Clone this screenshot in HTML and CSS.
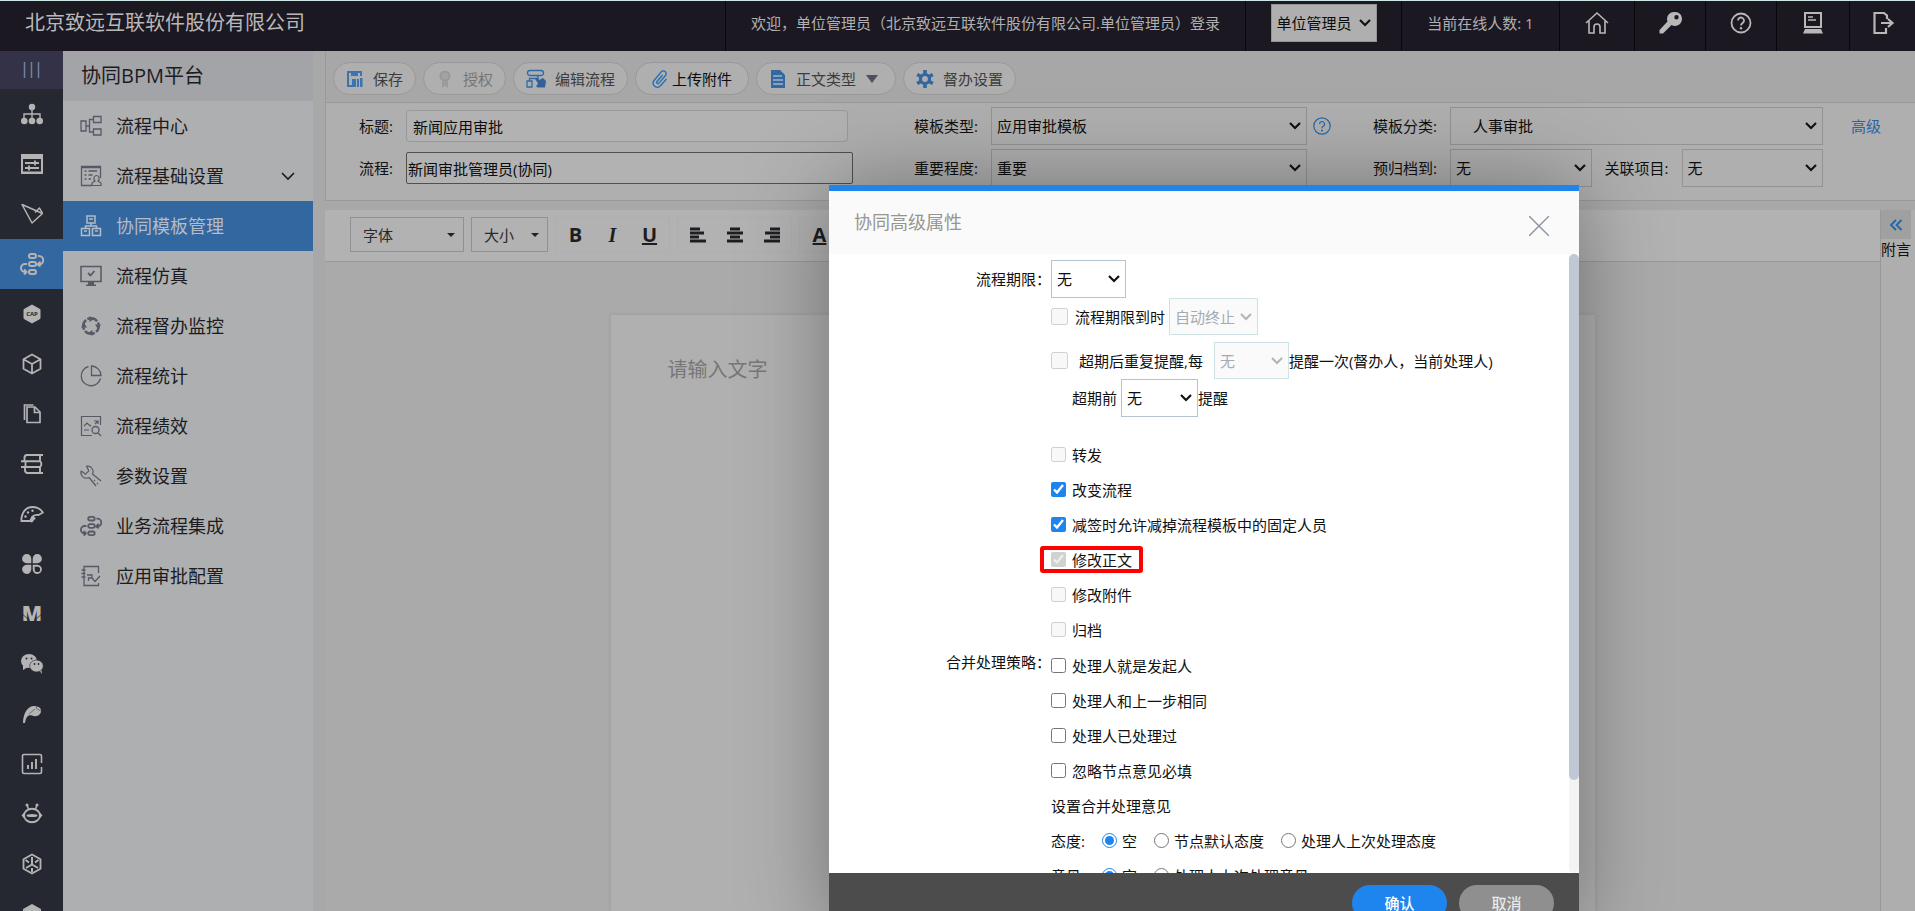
FILE: index.html
```html
<!DOCTYPE html>
<html lang="zh-CN">
<head>
<meta charset="utf-8">
<title>协同BPM平台</title>
<link rel="stylesheet" href="styles.css">
</head>
<body>
<svg class="symbols" aria-hidden="true">
  <symbol id="i-flow" viewBox="0 0 24 24"><g fill="none" stroke="currentColor" stroke-width="2"><rect x="9" y="2" width="7" height="4" rx="2"/><rect x="9" y="10" width="7" height="4" rx="2"/><rect x="9" y="18" width="7" height="4" rx="2"/><path d="M18 4h1a4 4 0 0 1 0 8.500M7 12H5a4 4 0 0 0 0 8h1M20.500 9.800 17.500 12.500l3 2M4 17.500l2.500 2.500L4 22.500"/></g></symbol>
</svg>
<div class="page">
  <header class="topbar">
    <h1 class="company">北京致远互联软件股份有限公司</h1>
    <div class="cell welcome">欢迎，单位管理员（北京致远互联软件股份有限公司.单位管理员）登录</div>
    <div class="cell role"><select class="select role-select" aria-label="角色"><option>单位管理员</option></select></div>
    <div class="cell online">当前在线人数: 1</div>
    <button class="cell tool w-home" aria-label="首页"><svg class="ico24" viewBox="0 0 24 24"><path d="M1 12 12 2l11 10M4 10v12h5v-6a3 3 0 0 1 6 0v6h5V10" fill="none" stroke="currentColor" stroke-width="1.600"/></svg></button>
    <button class="cell tool" aria-label="修改密码"><svg class="ico24" viewBox="0 0 24 24"><path fill="currentColor" fill-rule="evenodd" d="M16 1a7 7 0 0 0-6.500 9.500L1.500 19v3.500H5L13.500 14A7 7 0 1 0 16 1zm2.500 3a2.200 2.200 0 1 1 0 4.400 2.200 2.200 0 0 1 0-4.400z"/></svg></button>
    <button class="cell tool" aria-label="帮助"><svg class="ico24" viewBox="0 0 24 24"><g fill="none" stroke="currentColor" stroke-width="1.800"><circle cx="12" cy="12" r="9.500"/><path d="M9 9.500a3 3 0 1 1 4.500 2.600c-1 .6-1.500 1.100-1.500 2.400"/></g><circle cx="12" cy="17.300" r="1.200" fill="currentColor"/></svg></button>
    <button class="cell tool w-pc" aria-label="桌面"><svg class="ico24" viewBox="0 0 24 24"><path d="M4 2h16v14H4z" fill="none" stroke="currentColor" stroke-width="2"/><path d="M7 6h5M7 9h8" stroke="currentColor" stroke-width="1.600"/><path d="M4 18h16l2 4.500H2z" fill="currentColor"/></svg></button>
    <button class="cell tool w-exit" aria-label="退出"><svg class="ico24" viewBox="0 0 24 24"><path d="M16 8V4.500L13 2H3.500v20H15v-5M10 12h11M17 8l4.500 4-4.500 4" fill="none" stroke="currentColor" stroke-width="2.200"/></svg></button>
  </header>

  <div class="main">
    <nav class="rail" aria-label="应用">
      <button class="rail-top" aria-label="收起"><svg class="ico22" viewBox="0 0 22 22"><path d="M3.500 3v16M10.500 3v16M17.500 3v16" stroke="#6f7f9e" stroke-width="1.500"/></svg></button>
      <a href="#" class="rail-item" aria-label="组织"><svg class="ico22" viewBox="0 0 22 22"><path d="M11 4v12M3 16v-5h16v5" fill="none" stroke="currentColor" stroke-width="1.400"/><circle cx="11" cy="4" r="3.200" fill="currentColor"/><circle cx="3.300" cy="18" r="3.300" fill="currentColor"/><circle cx="11" cy="18" r="3.300" fill="currentColor"/><circle cx="18.700" cy="18" r="3.300" fill="currentColor"/></svg></a>
      <a href="#" class="rail-item" aria-label="配置"><svg class="ico22" viewBox="0 0 22 22"><path d="M0 1h22v20H0zM2 6v12.500h18V6z" fill="currentColor" fill-rule="evenodd"/><path d="M4 10h14M4 15h14M14 7.500v5M8 12.500v5" stroke="currentColor" stroke-width="1.800"/></svg></a>
      <a href="#" class="rail-item" aria-label="指引"><svg class="ico22" viewBox="0 0 22 22"><path d="M1 1.500 11 20l10.500-9.500zM14 9.500l4.500-4.500 3 5.500" fill="none" stroke="currentColor" stroke-width="1.500" stroke-linejoin="round"/></svg></a>
      <a href="#" class="rail-item rail-on" aria-label="协同流程"><svg class="ico24"><use href="#i-flow"/></svg></a>
      <a href="#" class="rail-item" aria-label="CAP"><svg class="ico22" viewBox="0 0 22 22"><path d="m11 2 8 4.500v9L11 20l-8-4.500v-9z" fill="currentColor" stroke="currentColor" stroke-linejoin="round"/><text x="11" y="13" text-anchor="middle" class="cap-text">CAP</text></svg></a>
      <a href="#" class="rail-item" aria-label="业务"><svg class="ico22" viewBox="0 0 22 22"><path d="m11 1.500 8.500 4.700v9.600L11 20.500l-8.500-4.700V6.200zM2.500 6.200 11 11l8.500-4.800M11 11v9.500" fill="none" stroke="currentColor" stroke-width="1.800" stroke-linejoin="round"/></svg></a>
      <a href="#" class="rail-item" aria-label="文档"><svg class="ico22" viewBox="0 0 22 22"><path d="M6 4h8l5 5v10.500H6zM13.500 4.500V9.500H19M3.500 17V2h9" fill="none" stroke="currentColor" stroke-width="1.700"/></svg></a>
      <a href="#" class="rail-item" aria-label="知识"><svg class="ico22" viewBox="0 0 22 22"><path d="M22 2H5.500a3 3 0 0 0-2 3v3M0 8.200h19M19 2v6a4 4 0 0 1 0 6M0 14h19M5.500 8a3 3 0 0 0-1 3v3M4 14v3a3 3 0 0 0 2 3h16M19 14v6" fill="none" stroke="currentColor" stroke-width="1.900"/></svg></a>
      <a href="#" class="rail-item" aria-label="仪表盘"><svg class="ico24" viewBox="0 0 24 24"><path d="M1.300 19C1.500 10 6 5 12.500 5c4 0 8 2 10.500 5.500l-4.500 2.500c-2.500-.5-5 0-6.500 2l-1.500 4z" fill="none" stroke="currentColor" stroke-width="1.800" stroke-linejoin="round"/><path d="m10.500 19.500 4-4.500" stroke="currentColor" stroke-width="3.500"/><circle cx="5.500" cy="14.500" r="1.200" fill="currentColor"/><circle cx="8" cy="10.500" r="1.200" fill="currentColor"/><circle cx="12.500" cy="8.800" r="1.200" fill="currentColor"/></svg></a>
      <a href="#" class="rail-item" aria-label="应用"><svg class="ico22" viewBox="0 0 22 22"><g fill="currentColor"><path d="M10.300 10.300H5.500a4.600 4.600 0 1 1 4.800-4.800zM11.700 10.300V5.500a4.600 4.600 0 1 1 4.800 4.800zM10.300 11.700v4.800a4.600 4.600 0 1 1-4.800-4.800z"/><path fill-rule="evenodd" d="M11.700 11.700h4.800a4.600 4.600 0 1 1-4.800 4.800zm2 2v2.800a2.700 2.700 0 1 0 2.800-2.800z"/></g></svg></a>
      <a href="#" class="rail-item" aria-label="M"><svg class="ico22" viewBox="0 0 22 22"><text x="11" y="18" text-anchor="middle" class="m-text">M</text><path d="M0 10l7 6M22 10l-7 6" stroke="#252830" stroke-width=".8"/></svg></a>
      <a href="#" class="rail-item" aria-label="微信"><svg class="ico24" viewBox="0 0 24 24"><ellipse cx="9" cy="9" rx="8" ry="7" fill="currentColor"/><path d="m3 13 0 5 5-3zM18 17l4 5-1-7z" fill="currentColor"/><ellipse cx="16.500" cy="14" rx="6.800" ry="6" fill="currentColor" stroke="#252830" stroke-width=".6"/><g fill="#252830"><circle cx="6.500" cy="6.500" r="1"/><circle cx="11.500" cy="6.500" r="1"/><circle cx="14.500" cy="12" r=".9"/><circle cx="18.500" cy="12" r=".9"/></g></svg></a>
      <a href="#" class="rail-item" aria-label="写作"><svg class="ico22" viewBox="0 0 22 22"><path d="M2 20C2 10 7 3 13 3c4 0 8 2 7 6-1 4-6 5-9 3.500C7 11.500 5 14 4 20z" fill="currentColor"/><path d="m8 11 6-5M15 3l1 3 4 2" stroke="#252830" stroke-width=".5" fill="none"/></svg></a>
      <a href="#" class="rail-item" aria-label="报表"><svg class="ico22" viewBox="0 0 22 22"><path d="M20.500 10V3a1.500 1.500 0 0 0-1.500-1.500H3A1.500 1.500 0 0 0 1.500 3v16A1.500 1.500 0 0 0 3 20.500h16a1.500 1.500 0 0 0 1.500-1.500v-5" fill="none" stroke="currentColor" stroke-width="1.600"/><path d="M7 16v-4M11 16V9M15 16V6" stroke="currentColor" stroke-width="1.900"/></svg></a>
      <a href="#" class="rail-item" aria-label="机器人"><svg class="ico22" viewBox="0 0 22 22"><path d="M7.500 6 6 2M14.500 6 16 2" stroke="currentColor" stroke-width="1.500"/><circle cx="6" cy="2" r="1.500" fill="currentColor"/><circle cx="16" cy="2" r="1.500" fill="currentColor"/><ellipse cx="11" cy="12.500" rx="8" ry="6.700" fill="none" stroke="currentColor" stroke-width="1.900"/><ellipse cx="11" cy="12.500" rx="5.500" ry="1.500" fill="currentColor"/><path d="M3 9.500.5 12.500 3 15zM19 9.500l2.500 3L19 15z" fill="currentColor"/></svg></a>
      <a href="#" class="rail-item" aria-label="集成"><svg class="ico22" viewBox="0 0 22 22"><path d="m11 1.500 8.500 4.700v9.600L11 20.500l-8.500-4.700V6.200z" fill="none" stroke="currentColor" stroke-width="1.800" stroke-linejoin="round"/><path d="M11 4v7.500l-6 3.500M11 11.500l6 3.500M4.500 7 8 9.500M17.500 7 14 9.500M11 19v-4" fill="none" stroke="currentColor" stroke-width="2"/></svg></a>
      <a href="#" class="rail-item" aria-label="更多"><svg class="ico22" viewBox="0 0 22 22"><path d="m11 1 9 5v2l-9 5-9-5V6z" fill="currentColor"/><path d="m2 12 9 5 9-5v3l-9 5-9-5z" fill="currentColor"/></svg></a>
    </nav>

    <nav class="side" aria-label="协同BPM平台">
      <h2 class="side-title">协同BPM平台</h2>
      <a href="#" class="side-item"><svg class="ico22" viewBox="0 0 22 22"><path d="M1 6h5v10H1zM13.500 1.500h7.500v6h-7.500zM13.500 14h7.500v6h-7.500zM6 11h3.500M13.500 4.500h-4v12.500h4" fill="none" stroke="currentColor" stroke-width="1.300"/></svg>流程中心</a>
      <a href="#" class="side-item"><svg class="ico22" viewBox="0 0 22 22"><path d="M12 20.500H1.500v-19h19V13M4.500 6h2M8.500 6H17M4.500 10h2M8.500 10h4M4.500 14h2M8.500 14H11" fill="none" stroke="currentColor" stroke-width="1.300"/><path d="M1.500 2.500h19" stroke="currentColor" stroke-width="1.500"/><path d="M16.500 10.500a2.500 3 0 0 1 1.500 5.500l3 2v2.500h-9V18l3-2a2.500 3 0 0 1 1.500-5.500z" fill="none" stroke="currentColor" stroke-width="1.200"/></svg>流程基础设置<svg class="chev" viewBox="0 0 16 16"><path d="m2 5 6 6 6-6" fill="none" stroke="currentColor" stroke-width="1.600"/></svg></a>
      <a href="#" class="side-item side-on"><svg class="ico22" viewBox="0 0 22 22"><path d="M7 1h8v7H7zM1.500 13.500h8v7h-8zM12.500 13.500h8v7h-8zM11 8v3M5.500 13.500V11h11v2.500M9 4h4M4 16h3M15 16h3" fill="none" stroke="currentColor" stroke-width="1.500"/></svg>协同模板管理</a>
      <a href="#" class="side-item"><svg class="ico22" viewBox="0 0 22 22"><path d="M1 1.500h20v15H1z" fill="none" stroke="currentColor" stroke-width="1.500"/><path d="m8 8 2.500 2.500L14.500 6" fill="none" stroke="currentColor" stroke-width="1.800"/><path d="M8 17h6v2.500h2V21H6v-1.500h2z" fill="currentColor"/></svg>流程仿真</a>
      <a href="#" class="side-item"><svg class="ico22" viewBox="0 0 22 22"><circle cx="11" cy="11" r="7.800" fill="none" stroke="currentColor" stroke-width="2.400" stroke-dasharray="10.700 1.550" stroke-dashoffset="4"/><path d="M9.500 1v6l4.500-3zM21 9.500h-6l3 4.500zM12.500 21v-6L8 18zM1 12.500h6L4 8z" fill="currentColor"/></svg>流程督办监控</a>
      <a href="#" class="side-item"><svg class="ico22" viewBox="0 0 22 22"><path d="M8.500 1.500a9.800 9.800 0 1 0 12 12M11.500 1v9.500H21A9.700 9.700 0 0 0 11.500 1z" fill="none" stroke="currentColor" stroke-width="1.300"/></svg>流程统计</a>
      <a href="#" class="side-item"><svg class="ico22" viewBox="0 0 22 22"><path d="M12 20.500H1.500v-19h19V10M4 11l3-3 3 3 1-1M4 15h5M14 6h4v3M18 6l-3 3" fill="none" stroke="currentColor" stroke-width="1.200"/><circle cx="15.500" cy="15" r="3.500" fill="none" stroke="currentColor" stroke-width="1.300"/><path d="m18 18 3 3" stroke="currentColor" stroke-width="1.300"/></svg>流程绩效</a>
      <a href="#" class="side-item"><svg class="ico22" viewBox="0 0 22 22"><path d="M16 21l-7-8.500A5.500 5.500 0 0 1 1.200 6l4.300 3.200 3.300-3.400L6.500 1.200A5.500 5.500 0 0 1 12.500 9l8.500 7M14 15l1 1M17 18l1 1" fill="none" stroke="currentColor" stroke-width="1.200" stroke-linejoin="round"/></svg>参数设置</a>
      <a href="#" class="side-item"><svg class="ico22"><use href="#i-flow"/></svg>业务流程集成</a>
      <a href="#" class="side-item"><svg class="ico22" viewBox="0 0 22 22"><path d="M18.500 8V1.500H4v19h14.500V18M1.500 5h4M1.500 8.500h4M1.500 12h4M7 10h5v3H8.500v3M12 13l3 3.500 5-5.500" fill="none" stroke="currentColor" stroke-width="1.300"/></svg>应用审批配置</a>
    </nav>

    <main class="content">
      <div class="actions">
        <button class="pill"><svg class="ico18" viewBox="0 0 18 18"><path d="M1 1h15v5h-2V3h-2v3H5V3H3v12h4v2H1zM6 9h4v8H6zM11 9h2v8h-2zM14 8h2.500v9H14z" fill="#3b74b0"/></svg>保存</button>
        <button class="pill pill-off" disabled><svg class="ico18" viewBox="0 0 18 18"><circle cx="9" cy="6" r="4.500" fill="#a2a2a2" stroke="#989898" stroke-width="2"/><path d="M6 11h6v7l-3-2-3 2z" fill="#9c9c9c"/></svg>授权</button>
        <button class="pill"><svg class="ico20" viewBox="0 0 20 20"><path d="M4 1.500h11a2 2 0 0 1 0 5H4a2 2 0 0 1 0-5zM1 12h5v6H1zM3.500 12V9.500h8.500V7" fill="none" stroke="#2f6ba8" stroke-width="1.300"/><path d="m9 9.500 2.500-1L13 11l4-2 3 3-1 6.500h-7l-2-1 2-3z" fill="#345f97"/></svg>编辑流程</button>
        <button class="pill pill-dark"><svg class="ico20" viewBox="0 0 20 20"><path d="M12.500 6 7 12.500a1.300 1.300 0 0 0 2 1.700l6.500-7.700a2.800 2.800 0 0 0-4.300-3.600L4 11.500a4.200 4.200 0 0 0 6.500 5.300L16.500 10" fill="none" stroke="#1f6fb8" stroke-width="1.300"/></svg>上传附件</button>
        <button class="pill"><svg class="ico18" viewBox="0 0 18 18"><path d="M2 0h9l5 5v13H2z" fill="#3568a0"/><path d="M4 6h9M4 10h10M4 14h10" stroke="#9fb2c8" stroke-width="1.300"/></svg>正文类型<svg class="tri" viewBox="0 0 12 8"><path d="M0 0h12L6 8z" fill="#4c4f5c"/></svg></button>
        <button class="pill"><svg class="ico18" viewBox="0 0 18 18"><path d="M9 4.500a4.500 4.500 0 1 0 0 9 4.500 4.500 0 0 0 0-9z" fill="none" stroke="#34679f" stroke-width="3.200"/><path d="M9 0v4M9 14v4M1.200 4.500l3.500 2M13.300 11.500l3.500 2M1.200 13.500l3.500-2M13.300 6.500l3.500-2" stroke="#34679f" stroke-width="3.600"/></svg>督办设置</button>
      </div>

      <form class="form">
        <label class="lab" for="title">标题:</label>
        <input class="text text-title" id="title" value="新闻应用审批">
        <label class="lab" for="kind">模板类型:</label>
        <select class="select" id="kind"><option>应用审批模板</option></select>
        <div class="lab-help">
          <svg class="ico18" viewBox="0 0 18 18"><g fill="none" stroke="#2469ab" stroke-width="1.200"><circle cx="9" cy="9" r="8.200"/><path d="M6.500 7a2.500 2.500 0 1 1 3.700 2.200C9.300 9.700 9 10.200 9 11.300"/></g><circle cx="9" cy="13.500" r="1" fill="#2469ab"/></svg>
          <label class="lab" for="class">模板分类:</label>
        </div>
        <select class="select indent" id="class"><option>人事审批</option></select>
        <a href="#" class="more">高级</a>

        <label class="lab" for="flow">流程:</label>
        <input class="text text-flow" id="flow" value="新闻审批管理员(协同)">
        <label class="lab" for="level">重要程度:</label>
        <select class="select" id="level"><option>重要</option></select>
        <label class="lab" for="archive">预归档到:</label>
        <div class="pair">
          <select class="select" id="archive"><option>无</option></select>
          <label class="lab" for="project">关联项目:</label>
          <select class="select" id="project"><option>无</option></select>
        </div>
      </form>

      <div class="work">
        <section class="editor">
          <div class="ed-bar">
            <button class="drop drop-font">字体<svg class="caret" viewBox="0 0 8 4"><path d="M0 0h8L4 4z"/></svg></button>
            <button class="drop drop-size">大小<svg class="caret" viewBox="0 0 8 4"><path d="M0 0h8L4 4z"/></svg></button>
            <div class="group">
              <button class="ed-btn b">B</button><button class="ed-btn i">I</button><button class="ed-btn u">U</button>
            </div>
            <div class="group">
              <button class="ed-btn" aria-label="左对齐"><svg class="ico16" viewBox="0 0 16 16"><path d="M0 2h10M0 6h14M0 10h9M0 14h16" stroke="currentColor" stroke-width="2.800"/></svg></button>
              <button class="ed-btn" aria-label="居中"><svg class="ico16" viewBox="0 0 16 16"><path d="M3 2h10M0 6h16M3 10h10M0 14h16" stroke="currentColor" stroke-width="2.800"/></svg></button>
              <button class="ed-btn" aria-label="右对齐"><svg class="ico16" viewBox="0 0 16 16"><path d="M6 2h10M1 6h15M6 10h10M0 14h16" stroke="currentColor" stroke-width="2.800"/></svg></button>
            </div>
            <div class="group">
              <button class="ed-btn color">A</button>
            </div>
          </div>
          <div class="canvas">
            <div class="paper">请输入文字</div>
          </div>
        </section>
        <aside class="notes">
          <button class="notes-btn" aria-label="展开"><svg class="ico14" viewBox="0 0 14 14"><path d="M7 2 2 7l5 5M12.500 2l-5 5 5 5" fill="none" stroke="#1f66ab" stroke-width="1.800"/></svg></button>
          <span>附言</span>
        </aside>
      </div>
    </main>
  </div>

  <div class="dialog" role="dialog" aria-labelledby="dlg">
    <div class="dlg-head">
      <h2 class="dlg-title" id="dlg">协同高级属性</h2>
      <button class="close" aria-label="关闭"><svg class="ico20" viewBox="0 0 20 20"><path d="m0 0 20 20M20 0 0 20" stroke="#88939f" stroke-width="1.400"/></svg></button>
    </div>
    <div class="dlg-main">
      <div class="fields">
        <label class="f-lab" for="limit">流程期限：</label>
        <div class="limits">
          <div class="line tall"><select class="select w75" id="limit"><option>无</option></select></div>
          <div class="line"><input type="checkbox" class="big" id="due" disabled><label class="t-due" for="due">流程期限到时</label><select class="select w89" disabled aria-label="到期动作"><option>自动终止</option></select></div>
          <div class="line late"><input type="checkbox" class="big" id="late" disabled><label class="t-late" for="late">超期后重复提醒,每</label><select class="select w75" disabled aria-label="提醒间隔"><option>无</option></select><span>提醒一次(督办人，当前处理人)</span></div>
          <div class="line tall before"><label for="before">超期前</label><select class="select w77" id="before"><option>无</option></select><span>提醒</span></div>
        </div>

        <div class="checks">
          <label class="row"><input type="checkbox" disabled>转发</label>
          <label class="row"><input type="checkbox" checked>改变流程</label>
          <label class="row"><input type="checkbox" checked>减签时允许减掉流程模板中的固定人员</label>
          <label class="row mark"><input type="checkbox" checked disabled>修改正文</label>
          <label class="row"><input type="checkbox" disabled>修改附件</label>
          <label class="row"><input type="checkbox" disabled>归档</label>
        </div>

        <div class="f-lab f-merge">合并处理策略：</div>
        <div class="merge">
          <label class="row"><input type="checkbox">处理人就是发起人</label>
          <label class="row"><input type="checkbox">处理人和上一步相同</label>
          <label class="row"><input type="checkbox">处理人已处理过</label>
          <label class="row"><input type="checkbox">忽略节点意见必填</label>
          <div class="row">设置合并处理意见</div>
          <div class="row radios"><span class="r-lab">态度:</span><label class="radio"><input type="radio" name="att" checked>空</label><label class="radio"><input type="radio" name="att">节点默认态度</label><label class="radio"><input type="radio" name="att">处理人上次处理态度</label></div>
          <div class="row radios"><span class="r-lab">意见:</span><label class="radio"><input type="radio" name="opi" checked>空</label><label class="radio"><input type="radio" name="opi">处理人上次处理意见</label></div>
        </div>
      </div>
      <div class="track"><div class="thumb"></div></div>
    </div>
    <div class="dlg-foot">
      <button class="ok">确认</button>
      <button class="ok cancel">取消</button>
    </div>
  </div>
</div>
</body>
</html>
```
FILE: styles.css
```css
*, *::after { box-sizing: border-box; }

body {
  margin: 0;
  font: 15px/20px "Open Sans", "Noto Sans CJK SC", sans-serif;
  color: #111;
}

h1, h2 { margin: 0; font-weight: 400; }
a { color: inherit; text-decoration: none; }
button { padding: 0; border: 0; background: none; font: inherit; color: inherit; }
input, select { font: inherit; margin: 0; }
svg { display: block; flex: none; }

.symbols { position: absolute; width: 0; height: 0; }
.ico14 { width: 14px; height: 14px; }
.ico16 { width: 16px; height: 16px; }
.ico18 { width: 18px; height: 18px; }
.ico20 { width: 20px; height: 20px; }
.ico22 { width: 22px; height: 22px; }
.ico24 { width: 24px; height: 24px; }

.page {
  position: relative;
  display: flex;
  flex-direction: column;
  height: 100vh;
  overflow: hidden;
  border-top: 1px solid #d0e8e8;
  background: #a8a8a8;
}

/* top bar */
.topbar {
  display: flex;
  flex: none;
  height: 50px;
  background: #1b1822;
  color: #b0b0b2;
}
.company {
  flex: 1;
  padding: 8px 0 0 25px;
  font-size: 20px;
  line-height: 28px;
  color: #b8b8ba;
}
.cell {
  display: flex;
  align-items: center;
  justify-content: center;
  padding-bottom: 6px;
  border-left: 1px solid #08080c;
}
.welcome { width: 520px; }
.role { width: 156px; }
.online { width: 158px; }
.tool { width: 71px; color: #b8b8b8; }
.w-home { width: 75px; }
.w-pc { width: 73px; }
.w-exit { width: 66px; }

.select {
  height: 38px;
  min-width: 0;
  padding: 0 20px 0 5px;
  border: 1px solid #939393;
  border-radius: 0;
  appearance: none;
  background: #afafaf url("data:image/svg+xml,%3Csvg xmlns='http://www.w3.org/2000/svg' viewBox='0 0 12 8'%3E%3Cpath d='M1 1l5 5 5-5' fill='none' stroke='%23111' stroke-width='2.200'/%3E%3C/svg%3E") no-repeat right 5px center / 12px 8px;
  color: #0c0c0c;
}
.role-select { width: 106px; }

.main { display: flex; flex: 1; min-height: 0; }

/* application rail */
.rail {
  display: flex;
  flex: none;
  flex-direction: column;
  width: 63px;
  overflow: hidden;
  background: #252830;
  color: #b4b4b4;
}
.rail-top, .rail-item {
  display: flex;
  flex: none;
  align-items: center;
  justify-content: center;
  height: 50px;
}
.rail-top { height: 38px; background: #343246; }
.rail-on { background: #33679f; }
.cap-text { font: 700 6px "Open Sans", sans-serif; fill: #252830; }
.m-text { font: 800 21px "Open Sans", sans-serif; fill: currentColor; }

/* side menu */
.side { flex: none; width: 250px; background: #aeafb1; color: #1c1c20; }
.side-title {
  padding: 11px 18px;
  font-size: 20px;
  line-height: 28px;
  background: #a3a4a8;
}
.side-item {
  display: flex;
  align-items: center;
  gap: 14px;
  height: 50px;
  padding: 0 17px;
  font-size: 18px;
}
.side-item svg { color: #565a66; }
.side-item .chev { width: 16px; height: 16px; margin-left: auto; color: #1c1c20; }
.side-on, .side-on svg { background: #33679f; color: #b4bcc6; }

/* content */
.content {
  display: flex;
  flex: 1;
  flex-direction: column;
  min-width: 0;
  margin-left: 12px;
}
.actions {
  display: flex;
  gap: 7px;
  padding: 11px 7px 7px;
  border: solid #999;
  border-width: 0 0 1px 1px;
  background: #a7a7a7;
}
.pill {
  display: flex;
  align-items: center;
  gap: 9px;
  height: 33px;
  padding: 0 12px;
  border: 1px solid #999;
  border-radius: 17px;
  background: #afafaf;
  color: #3c3c3c;
}
.pill-off { color: #757575; }
.pill-dark { gap: 2px; padding: 0 16px 0 14px; color: #0c0c0c; }
.tri { width: 12px; height: 8px; margin: 0 5px 0 1px; }

.form {
  display: grid;
  grid-template-columns: 80px 447fr 138px 316fr 143px 373fr 92px;
  grid-auto-rows: 38px;
  gap: 4px 0;
  align-items: center;
  padding: 4px 0 13px;
  border: solid #999;
  border-width: 0 0 1px 1px;
  background: #afafaf;
}
.lab { padding-right: 13px; text-align: right; }
.lab-help { display: flex; align-items: center; justify-content: space-between; padding-left: 6px; }
.text {
  height: 32px;
  border: 1px solid #999;
  border-radius: 4px;
  background: #b2b2b2;
  color: #0c0c0c;
}
.text-title { padding: 0 6px; margin-right: 5px; }
.text-flow { padding: 0 1px; border-color: #505050; border-radius: 2px; }
.indent { padding-left: 22px; }
.more { padding-left: 28px; color: #1f66ab; }
.pair { display: flex; align-items: center; }
.pair .select { flex: 1; }
.pair .lab { width: 90px; }

.work { display: flex; flex: 1; min-height: 0; margin-top: 9px; }
.editor { display: flex; flex: 1; flex-direction: column; min-width: 0; background: #aaa; }
.ed-bar {
  display: flex;
  gap: 7px;
  padding: 7px 25px 9px;
  border-bottom: 1px solid #999;
  background: #b2b2b2;
}
.drop {
  display: flex;
  align-items: center;
  justify-content: space-between;
  height: 35px;
  padding: 0 8px 0 12px;
  border: 1px solid #919191;
  color: #2a2a2a;
}
.drop-font { width: 114px; }
.drop-size { width: 77px; }
.caret { width: 8px; height: 4px; fill: #222; }
.group { display: flex; height: 35px; padding: 0 1px; border: 1px solid #aeaeae; }
.ed-btn {
  display: flex;
  align-items: center;
  justify-content: center;
  width: 37px;
  color: #1e1e22;
  font-size: 20px;
}
.b { font-weight: 700; }
.i { font-style: italic; font-weight: 700; font-family: "Liberation Serif", serif; }
.u, .color { font-weight: 700; text-decoration: underline; }

.canvas { display: flex; flex: 1; justify-content: center; padding-top: 53px; }
.paper {
  width: 984px;
  padding: 41px 57px;
  background: #b0b0b0;
  box-shadow: 0 0 4px #999;
  font-size: 20px;
  line-height: 28px;
  color: #777;
}

.notes {
  display: flex;
  flex: none;
  flex-direction: column;
  width: 35px;
  border-left: 1px solid #989898;
  background: #aeaeae;
}
.notes-btn {
  display: flex;
  align-items: center;
  justify-content: center;
  width: 30px;
  height: 29px;
  background: #a0a0a0;
}

/* dialog */
.dialog {
  position: absolute;
  top: 184px;
  bottom: -22px;
  left: 829px;
  display: flex;
  flex-direction: column;
  width: 750px;
  border-top: 6px solid #1e84ee;
  background: #fff;
  box-shadow: 0 0 80px rgba(0, 0, 0, .35);
}
.dlg-head {
  display: flex;
  flex: none;
  align-items: center;
  justify-content: space-between;
  height: 63px;
  padding: 0 30px 2px 25px;
  background: #fafafa;
}
.dlg-title { font-size: 18px; color: #96968e; }
.close { padding-top: 8px; }
.dlg-main { display: flex; flex: 1; min-height: 0; overflow: hidden; }
.track { flex: none; width: 10px; border-radius: 5px; background: #f3f3f3; }
.thumb { height: 85%; border-radius: 5px; background: #c0c8d5; }

.fields {
  display: grid;
  flex: 1;
  grid-template-columns: 222px 1fr;
  align-content: start;
  padding-top: 6px;
}
.f-lab { padding-top: 9px; text-align: right; }
.f-merge { padding-top: 4px; }
.line { display: flex; align-items: center; height: 37px; }
.tall { height: 38px; }
.late { margin-top: 7px; }
.before { padding-left: 21px; gap: 4px; }
.before .select { margin-right: -4px; }
.limits .select:disabled { height: 37px; }
.dialog .select { border-color: #b4c4d2; background-color: #fff; }
.dialog .select:disabled {
  border-color: #cfe2e6;
  background-color: #fafafa;
  background-image: url("data:image/svg+xml,%3Csvg xmlns='http://www.w3.org/2000/svg' viewBox='0 0 12 8'%3E%3Cpath d='M1 1l5 5 5-5' fill='none' stroke='%23adb4ba' stroke-width='2'/%3E%3C/svg%3E");
  color: #a4abb2;
  opacity: 1;
}
.w75 { width: 75px; }
.w77 { width: 77px; }
.w89 { width: 89px; }
.big { width: 17px; height: 17px; }
.t-due { padding: 0 4px 0 7px; }
.t-late { padding: 0 11px; }

.checks, .merge { grid-column: 2; }
.checks { margin: 20px 0 1px; }
.row { display: flex; align-items: center; gap: 6px; height: 35px; }
.row input { width: 15px; height: 15px; }
.mark { position: relative; }
.mark::after {
  position: absolute;
  top: 4px;
  left: -11px;
  width: 103px;
  height: 27px;
  border: 4px solid #fe0000;
  border-radius: 3px;
  content: "";
}
input[type="checkbox"], input[type="radio"] { flex: none; accent-color: #1e84ee; }
.radios { gap: 17px; }
.radio { display: flex; align-items: center; gap: 5px; }

.dlg-foot {
  display: flex;
  flex: none;
  gap: 12px;
  align-items: flex-start;
  justify-content: flex-end;
  height: 60px;
  padding: 12px 25px;
  background: #4c4c4c;
}
.ok {
  width: 95px;
  height: 36px;
  border-radius: 18px;
  background: #1e84ee;
  color: #fff;
  font-weight: 500;
}
.cancel { background: #8f8f8f; color: #e8e8e8; }
```
